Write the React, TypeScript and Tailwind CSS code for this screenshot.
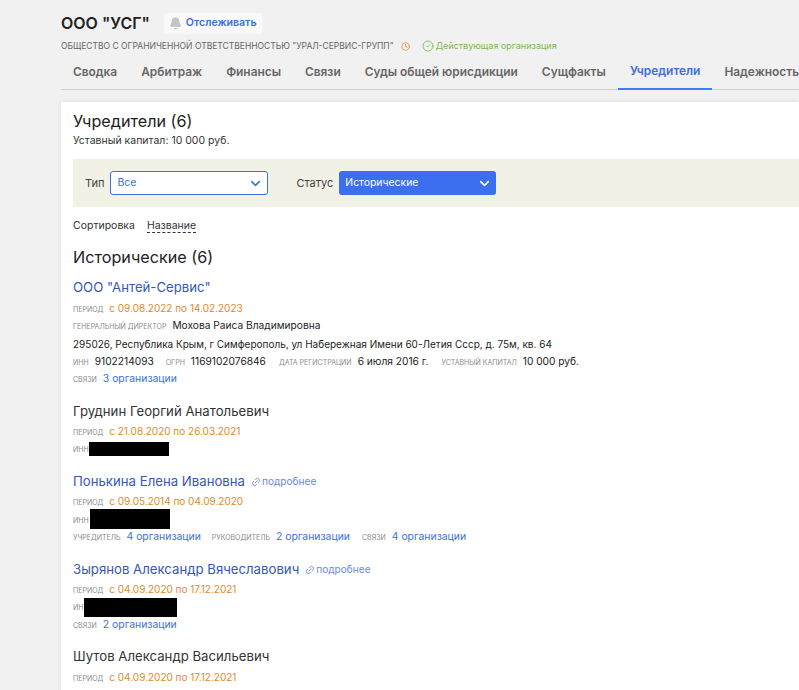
import { Bell, ChevronDown, Clock, CircleCheck, Link2 } from 'lucide-react';
import type { ReactNode } from 'react';

// ---------- data ----------
const TABS = ['Сводка', 'Арбитраж', 'Финансы', 'Связи', 'Суды общей юрисдикции', 'Сущфакты', 'Учредители', 'Надежность'];

// ---------- helpers ----------
function Label({ children }: { children: ReactNode }) {
  return <span className="mt-[3px] text-[7px] uppercase text-[#8a8a8a] mr-[6px]">{children}</span>;
}

function Row({ className = 'h-[18px]', children }: { className?: string; children: ReactNode }) {
  return <div className={`flex items-center whitespace-nowrap text-[10.2px] text-[#222] ${className}`}>{children}</div>;
}

function Period({ value, className = 'mt-[2px]' }: { value: string; className?: string }) {
  return (
    <Row className={`h-[17px] ${className}`}>
      <Label>Период</Label>
      <span className="text-[10px] text-[#e08a2c]">{value}</span>
    </Row>
  );
}

function Org({ children }: { children: ReactNode }) {
  return <span className="text-[10.4px] text-[#3d6fe0]">{children}</span>;
}

function More() {
  return (
    <span className="flex items-center gap-[1px] ml-[6px] text-[10.1px] text-[#6a8be0]">
      <Link2 size={10} strokeWidth={2} className="-rotate-45" />
      подробнее
    </span>
  );
}

function Name({ link, more, children }: { link?: boolean; more?: boolean; children: ReactNode }) {
  return (
    <div className="flex items-center h-[20px] whitespace-nowrap">
      <span className={`text-[13.2px] ${link ? 'text-[#3557b7]' : 'text-[#333]'}`}>{children}</span>
      {more && <More />}
    </div>
  );
}

// ---------- component ----------
export default function App() {
  return (
    <div className="w-[799px] h-[690px] overflow-hidden bg-[#f1f1f1] font-['Inter','Noto_Sans',sans-serif]">
      <header className="ml-[61px] pt-[12px]">
        <div className="flex items-center h-[22px]">
          <h1 className="text-[16px] font-semibold text-[#222]">ООО "УСГ"</h1>
          <button className="flex items-center ml-[14px] h-[21px] px-[5px] gap-[4px] rounded-[3px] bg-[#f9f9f9] text-[10.6px] font-semibold text-[#3d6fe0]">
            <Bell size={13} fill="#c4c4c4" stroke="#c4c4c4" />
            Отслеживать
          </button>
        </div>
        <div className="flex items-center h-[14px] mt-[5px] text-[8.5px] whitespace-nowrap text-[#666]">
          <span>ОБЩЕСТВО С ОГРАНИЧЕННОЙ ОТВЕТСТВЕННОСТЬЮ "УРАЛ-СЕРВИС-ГРУПП"</span>
          <Clock size={9} className="ml-[7px] text-[#e08a2c]" />
          <CircleCheck size={12} strokeWidth={1.5} className="ml-[12px] text-[#6ab04c]" />
          <span className="ml-[2px] text-[9px] text-[#7bb84f]">Действующая организация</span>
        </div>
        <nav className="flex h-[37px] border-b border-[#cfcfcf] whitespace-nowrap">
          {TABS.map((t) => (
            <span
              key={t}
              className={
                t === 'Учредители'
                  ? 'flex items-center px-[12px] h-[37px] text-[11.9px] font-semibold text-[#3d6fe0] border-b-2 border-[#3d7bf0]'
                  : 'flex items-center px-[12px] h-[37px] text-[11.9px] font-semibold text-[#666]'
              }
            >
              {t}
            </span>
          ))}
        </nav>
      </header>

      <main className="ml-[61px] mt-[12px] bg-white pl-[12px] h-[600px] shadow-[0_0_6px_rgba(0,0,0,0.08)]">
        <h2 className="pt-[8px] text-[16.2px] leading-[22px] text-[#222]">Учредители (6)</h2>
        <p className="mt-[2px] text-[10.5px] leading-[14px] text-[#333]">Уставный капитал: 10 000 руб.</p>

        <div className="flex items-center h-[48px] mt-[11px] pl-[12px] bg-[#f1f1e6] text-[11px] text-[#444]">
          <span>Тип</span>
          <div className="flex items-center justify-between w-[158px] h-[24px] ml-[6px] pl-[6px] pr-[4px] rounded-[3px] bg-white border border-[#3d6fe0] text-[#3d6fe0] text-[10.5px]">
            Все
            <ChevronDown size={15} strokeWidth={2.5} />
          </div>
          <span className="ml-[28px]">Статус</span>
          <div className="flex items-center justify-between w-[157px] h-[24px] ml-[6px] pl-[6px] pr-[4px] rounded-[3px] bg-[#3b6ff0] text-white text-[10.4px]">
            Исторические
            <ChevronDown size={15} strokeWidth={2.5} />
          </div>
        </div>

        <div className="flex h-[14px] mt-[12px] text-[10.5px] leading-[14px] text-[#333]">
          <span>Сортировка</span>
          <span className="ml-[12px] border-b border-dashed border-[#333]">Название</span>
        </div>

        <h3 className="mt-[13px] text-[16.2px] leading-[22px] text-[#222]">Исторические (6)</h3>

        <div className="mt-[10px]">
          <Name link>ООО "Антей-Сервис"</Name>
          <Period value="с 09.08.2022 по 14.02.2023" />
          <Row>
            <Label>Генеральный директор</Label>
            Мохова Раиса Владимировна
          </Row>
          <Row className="h-[18px] text-[10px]">295026, Республика Крым, г Симферополь, ул Набережная Имени 60-Летия Ссср, д. 75м, кв. 64</Row>
          <Row className="h-[17px]">
            <Label>ИНН</Label>
            <span className="mr-[12px]">9102214093</span>
            <Label>ОГРН</Label>
            <span className="mr-[13px]">1169102076846</span>
            <Label>Дата регистрации</Label>
            <span className="mr-[13px]">6 июля 2016 г.</span>
            <Label>Уставный капитал</Label>
            10 000 руб.
          </Row>
          <Row className="h-[17px]">
            <Label>Связи</Label>
            <Org>3 организации</Org>
          </Row>
        </div>

        <div className="mt-[15px]">
          <Name>Груднин Георгий Анатольевич</Name>
          <Period value="с 21.08.2020 по 26.03.2021" className="mt-[1px]" />
          <Row>
            <span className="w-[16px] mt-[3px] text-[7px] text-[#8a8a8a]">ИНН</span>
            <span className="w-[80px] h-[14px] bg-black" />
          </Row>
        </div>

        <div className="mt-[14px]">
          <Name link more>Понькина Елена Ивановна</Name>
          <Period value="с 09.05.2014 по 04.09.2020" className="mt-[1px]" />
          <Row>
            <span className="w-[17px] mt-[5px] text-[7px] text-[#8a8a8a]">ИНН</span>
            <span className="w-[80px] h-[20px] bg-black" />
          </Row>
          <Row>
            <Label>Учредитель</Label>
            <span className="mr-[11px]"><Org>4 организации</Org></span>
            <Label>Руководитель</Label>
            <span className="mr-[12px]"><Org>2 организации</Org></span>
            <Label>Связи</Label>
            <Org>4 организации</Org>
          </Row>
        </div>

        <div className="mt-[14px]">
          <Name link more>Зырянов Александр Вячеславович</Name>
          <Period value="с 04.09.2020 по 17.12.2021" className="mt-[1px]" />
          <Row>
            <span className="w-[11px] mt-[3px] text-[7px] text-[#8a8a8a]">ИН</span>
            <span className="w-[93px] h-[19px] bg-black" />
          </Row>
          <Row>
            <Label>Связи</Label>
            <Org>2 организации</Org>
          </Row>
        </div>

        <div className="mt-[13px]">
          <Name>Шутов Александр Васильевич</Name>
          <Period value="с 04.09.2020 по 17.12.2021" />
        </div>
      </main>
    </div>
  );
}
